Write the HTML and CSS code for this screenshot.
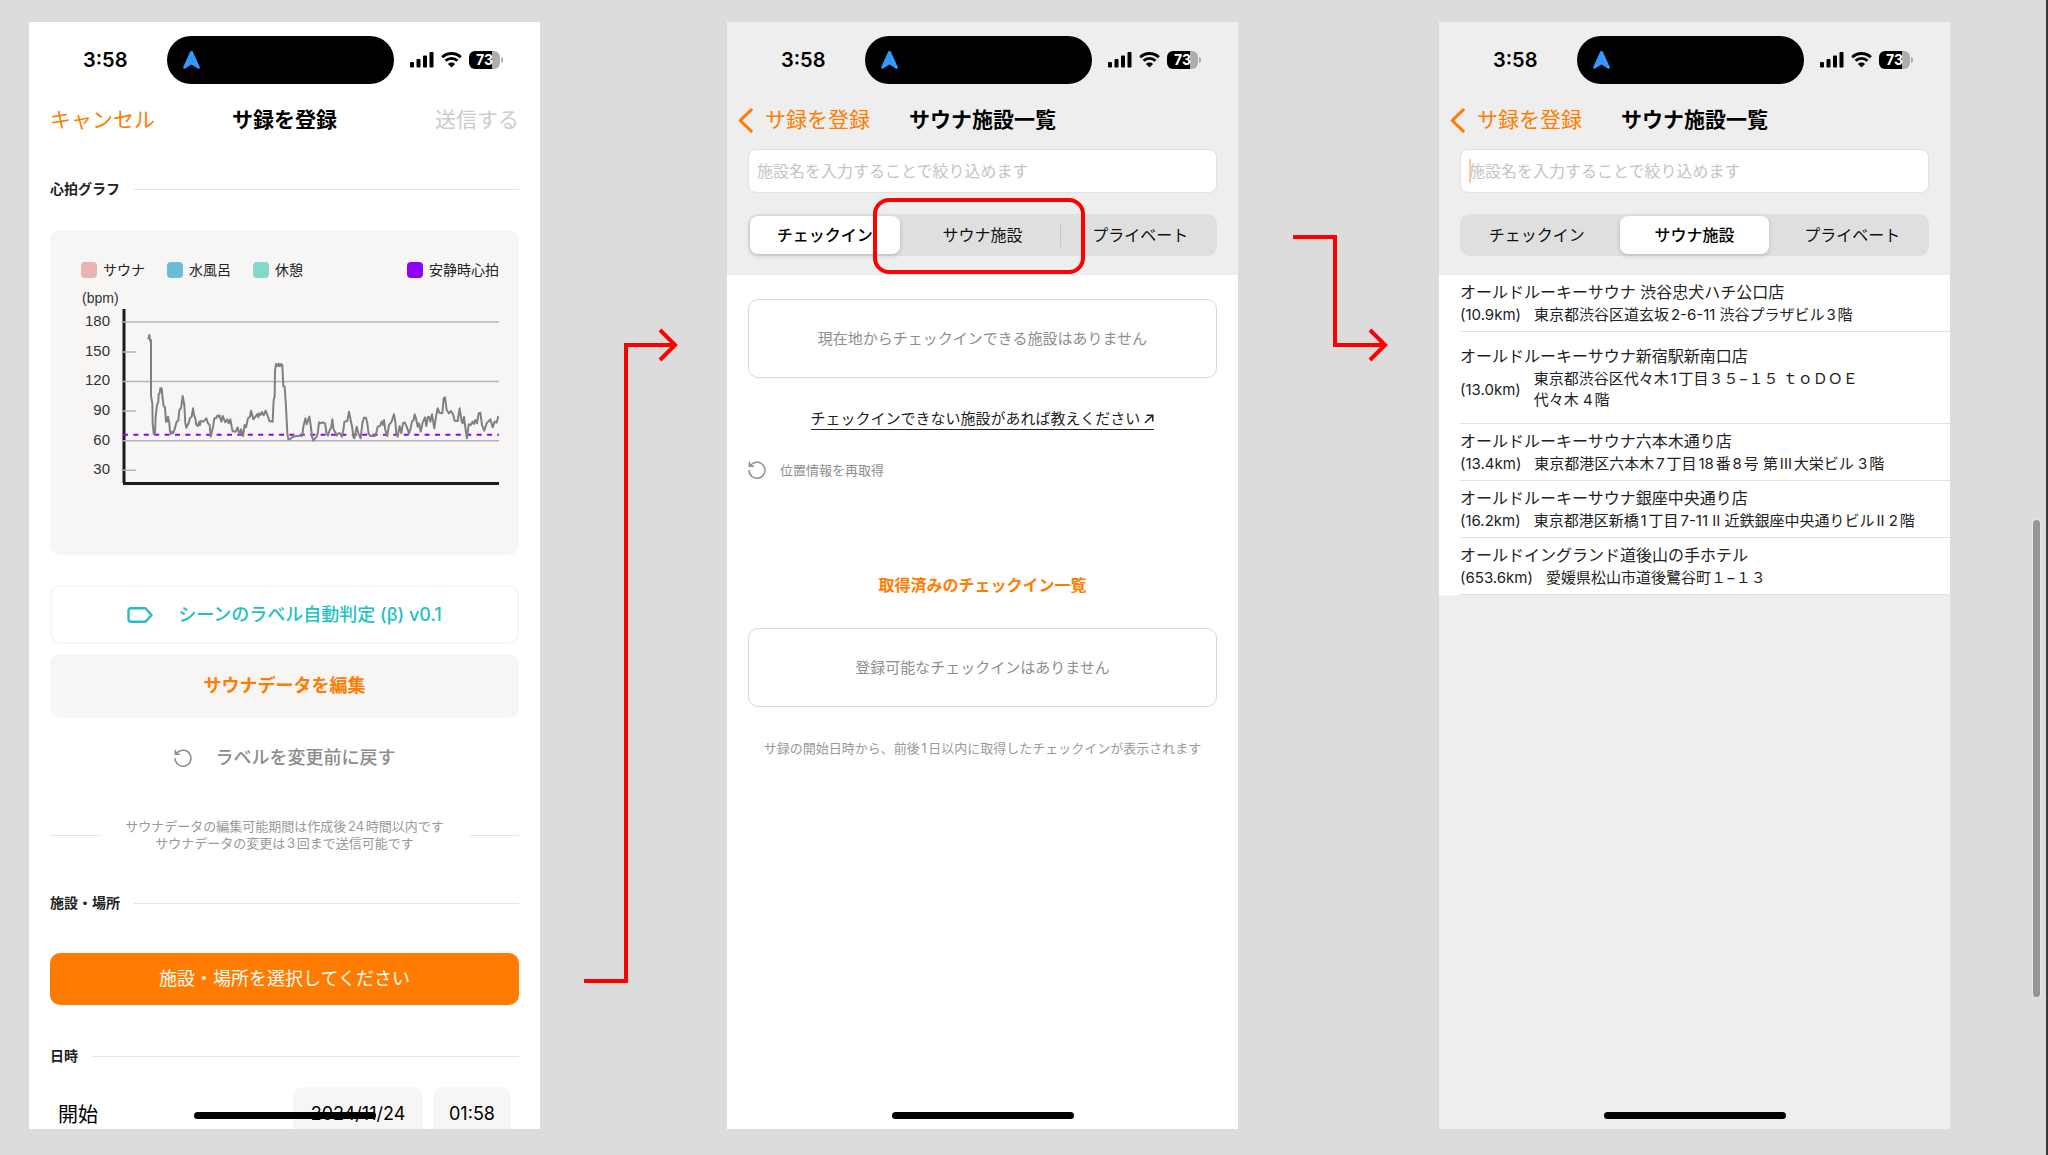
FILE: index.html
```html
<!DOCTYPE html>
<html lang="ja">
<head>
    <meta charset="UTF-8">
    <meta name="viewport" content="width=device-width, initial-scale=1.0">
    <title>サ録を登録 - 施設選択の流れ</title>
    <link rel="stylesheet" href="styles.css">
</head>
<body>
    <!-- Shared icons -->
    <svg class="sprite" aria-hidden="true">
        <symbol id="icon-location" viewBox="0 0 17 18">
            <path d="M8.500 0C9.300 0 9.800.5 10.100 1.200L16.700 15.800C17.300 17.200 16 18.300 14.800 17.600L8.500 13.600 2.200 17.600C1 18.300-.3 17.200.3 15.800L6.900 1.200C7.200.5 7.700 0 8.500 0Z" fill="#3399ff"/>
        </symbol>
        <symbol id="icon-signal" viewBox="0 0 24 16">
            <rect x="0" y="10" width="4" height="5.500" rx="1"/>
            <rect x="6.500" y="7" width="4" height="8.500" rx="1"/>
            <rect x="13" y="3.500" width="4" height="12" rx="1"/>
            <rect x="19.500" y="0" width="4" height="15.500" rx="1"/>
        </symbol>
        <symbol id="icon-wifi" viewBox="0 0 21 16">
            <path d="M1.200 5.300a13.300 13.300 0 0 1 18.600 0M4.600 8.800a8.500 8.500 0 0 1 11.800 0" fill="none" stroke="#000" stroke-width="2.900"/>
            <path d="M10.500 15.500L6.900 12a5.200 5.200 0 0 1 7.200 0Z"/>
        </symbol>
        <symbol id="icon-reload" viewBox="0 0 18 18">
            <path d="M1 9.200A8 8 0 1 0 3.700 3.200L1.500 5M1.400 .8V5.200H6" fill="none" stroke="currentColor" stroke-width="1.500"/>
        </symbol>
        <symbol id="icon-back" viewBox="0 0 15 25">
            <path d="M13.200 1.800L2.200 12.500 13.200 23.200" fill="none" stroke="currentColor" stroke-width="3" stroke-linecap="round" stroke-linejoin="round"/>
        </symbol>
    </svg>

    <main class="board">
        <!-- 1: record form -->
        <section class="phone">
            <div class="status">
                <span class="time">3:58</span>
                <span class="island"><svg width="17" height="18"><use href="#icon-location"/></svg></span>
                <svg width="24" height="16"><use href="#icon-signal"/></svg>
                <svg class="wifi" width="21" height="16"><use href="#icon-wifi"/></svg>
                <span class="battery">73</span>
            </div>
            <header class="nav">
                <button type="button" class="nav-cancel">キャンセル</button>
                <h1>サ録を登録</h1>
                <button type="button" class="nav-send" disabled>送信する</button>
            </header>
            <div class="form">
                <h2 class="section first">心拍グラフ</h2>
                <div class="card">
                    <ul class="legend">
                        <li><i class="sauna"></i>サウナ</li>
                        <li><i class="water"></i>水風呂</li>
                        <li><i class="rest"></i>休憩</li>
                        <li class="resting"><i class="pulse"></i>安静時心拍</li>
                    </ul>
                    <svg class="chart" viewBox="0 0 418 200" role="img" aria-label="心拍グラフ">
                        <text x="1" y="17" class="unit">(bpm)</text>
                        <g text-anchor="end">
                            <text x="29" y="40">180</text>
                            <text x="29" y="70">150</text>
                            <text x="29" y="99">120</text>
                            <text x="29" y="129">90</text>
                            <text x="29" y="159">60</text>
                            <text x="29" y="188">30</text>
                        </g>
                        <path class="axis" d="M43 23V197M42 197.500H418"/>
                        <path class="grid" d="M42 36H418M42 66H55M42 95.500H418M42 125H55M42 154.800H418M42 184.300H55"/>
                        <path class="base" d="M42 148.700H418"/>
                        <g transform="translate(29 4) scale(.3333)">
                            <polyline class="trace" points="115,148 118,135 120,152 123,150 123,318 127,340 128,400 131,431 135,431 137,380 141,345 145,335 146,312 149,310 151,295 155,295 158,325 161,348 165,352 168,395 171,395 174,380 178,400 180,425 183,432 187,425 190,430 196,410 200,395 205,392 208,360 213,355 218,318 223,345 226,400 229,413 236,400 240,385 245,380 249,355 252,375 256,385 259,405 264,408 268,395 270,405 272,393 280,395 289,385 294,400 299,405 302,440 307,420 310,405 313,385 318,385 322,377 326,380 328,376 334,395 338,378 346,397 352,388 356,400 361,388 366,415 368,424 377,425 383,412 386,425 390,432 393,418 399,438 404,405 408,412 414,385 420,380 423,362 427,375 430,388 438,378 442,372 445,382 448,370 452,375 456,366 461,376 467,362 474,380 478,393 488,395 491,330 494,320 495,245 498,222 503,228 506,221 510,229 513,222 517,225 520,288 524,290 528,350 532,430 535,448 540,448 545,443 552,440 560,438 570,437"/>
                        </g>
                        <g transform="translate(219 4) scale(.3333)">
                            <polyline class="trace" points="0,437 7,437 10,410 16,385 20,403 28,380 32,405 36,440 40,452 50,440 54,425 57,397 63,400 68,397 75,400 80,432 84,437 90,418 93,415 97,388 101,420 105,425 110,437 115,430 120,430 126,440 131,415 133,395 142,393 147,365 152,390 157,415 160,440 163,445 170,410 175,430 182,445 187,400 192,383 198,383 202,400 206,432 212,438 225,438 230,425 233,410 240,408 245,395 249,405 252,390 256,420 262,438 267,405 275,395 282,373 286,395 289,430 293,440 299,408 304,430 309,400 314,397 320,410 327,430 332,415 336,395 341,390 344,373 348,385 353,410 357,400 362,425 368,398 375,382 379,408 384,380 389,382 391,395 396,373 403,415 408,380 413,355 418,368 427,370 431,325 435,322 440,360 447,370 453,363 460,375 464,392 473,393 479,355 485,395 488,400 492,380 497,420 501,445 506,403 512,405 518,395 522,402 526,390 531,400 536,370 541,368 546,405 553,422 560,400 571,388 578,412 584,395 590,398 595,378"/>
                        </g>
                    </svg>
                </div>
                <button type="button" class="btn btn-label">
                    <svg width="26" height="16" viewBox="0 0 26 16"><path d="M4 1.200H18.500L24.500 8 18.500 14.800H4A2.500 2.500 0 0 1 1.500 12.300V3.700A2.500 2.500 0 0 1 4 1.200Z" fill="none" stroke="currentColor" stroke-width="2.400" stroke-linejoin="round"/></svg>
                    シーンのラベル自動判定 (β) v0.1
                </button>
                <button type="button" class="btn btn-edit">サウナデータを編集</button>
                <button type="button" class="btn btn-reset"><svg width="18" height="18"><use href="#icon-reload"/></svg>ラベルを変更前に戻す</button>
                <div class="limit">
                    <p>サウナデータの編集可能期間は作成後24時間以内です<br>サウナデータの変更は3回まで送信可能です</p>
                </div>
                <h2 class="section">施設・場所</h2>
                <button type="button" class="btn btn-place">施設・場所を選択してください</button>
                <h2 class="section">日時</h2>
                <div class="start">
                    <label for="start-date">開始</label>
                    <input type="text" id="start-date" class="date" value="2024/11/24">
                    <input type="text" class="clock" value="01:58" aria-label="開始時刻">
                </div>
            </div>
            <div class="home"></div>
        </section>

        <svg class="arrow" viewBox="0 0 187 1107" aria-hidden="true"><path d="M44 959H86V323H134M120 308L135 323 120 338"/></svg>

        <!-- 2: facility list, check-in tab -->
        <section class="phone">
            <div class="top">
                <div class="status">
                    <span class="time">3:58</span>
                    <span class="island"><svg width="17" height="18"><use href="#icon-location"/></svg></span>
                    <svg width="24" height="16"><use href="#icon-signal"/></svg>
                    <svg class="wifi" width="21" height="16"><use href="#icon-wifi"/></svg>
                    <span class="battery">73</span>
                </div>
                <header class="nav">
                    <button type="button" class="nav-back"><svg width="15" height="25"><use href="#icon-back"/></svg>サ録を登録</button>
                    <h1>サウナ施設一覧</h1>
                </header>
                <div class="search">
                    <input type="text" placeholder="施設名を入力することで絞り込めます" aria-label="施設名">
                </div>
                <div class="tabs">
                    <button type="button" class="active">チェックイン</button>
                    <button type="button" class="divided">サウナ施設</button>
                    <button type="button">プライベート</button>
                    <span class="highlight"></span>
                </div>
            </div>
            <div class="checkin">
                <p class="empty">現在地からチェックインできる施設はありません</p>
                <a class="report" href="#">チェックインできない施設があれば教えください <svg width="10" height="10" viewBox="0 0 10 10"><path d="M1 9L8.500 1.500M2.500 1.200H8.800V7.500" fill="none" stroke="currentColor" stroke-width="1.500"/></svg></a>
                <button type="button" class="relocate"><svg width="18" height="18"><use href="#icon-reload"/></svg>位置情報を再取得</button>
                <h2>取得済みのチェックイン一覧</h2>
                <p class="empty">登録可能なチェックインはありません</p>
                <p class="period">サ録の開始日時から、前後1日以内に取得したチェックインが表示されます</p>
            </div>
            <div class="home"></div>
        </section>

        <svg class="arrow" viewBox="0 0 201 1107" aria-hidden="true"><path d="M55 215H97V323H146M132 308L147 323 132 338"/></svg>

        <!-- 3: facility list, sauna tab -->
        <section class="phone gray">
            <div class="top">
                <div class="status">
                    <span class="time">3:58</span>
                    <span class="island"><svg width="17" height="18"><use href="#icon-location"/></svg></span>
                    <svg width="24" height="16"><use href="#icon-signal"/></svg>
                    <svg class="wifi" width="21" height="16"><use href="#icon-wifi"/></svg>
                    <span class="battery">73</span>
                </div>
                <header class="nav">
                    <button type="button" class="nav-back"><svg width="15" height="25"><use href="#icon-back"/></svg>サ録を登録</button>
                    <h1>サウナ施設一覧</h1>
                </header>
                <div class="search focused">
                    <input type="text" placeholder="施設名を入力することで絞り込めます" aria-label="施設名">
                </div>
                <div class="tabs">
                    <button type="button">チェックイン</button>
                    <button type="button" class="active">サウナ施設</button>
                    <button type="button">プライベート</button>
                </div>
            </div>
            <ul class="places">
                <li>
                    <h3>オールドルーキーサウナ 渋谷忠犬ハチ公口店</h3>
                    <p><span>(10.9km)</span><span>東京都渋谷区道玄坂2-6-11 渋谷プラザビル3階</span></p>
                </li>
                <li class="tall">
                    <h3>オールドルーキーサウナ新宿駅新南口店</h3>
                    <p><span>(13.0km)</span><span>東京都渋谷区代々木1丁目３５−１５ ｔｏＤＯＥ<br>代々木 4階</span></p>
                </li>
                <li>
                    <h3>オールドルーキーサウナ六本木通り店</h3>
                    <p><span>(13.4km)</span><span>東京都港区六本木7丁目18番8号 第III大栄ビル 3階</span></p>
                </li>
                <li>
                    <h3>オールドルーキーサウナ銀座中央通り店</h3>
                    <p><span>(16.2km)</span><span>東京都港区新橋1丁目7-11 II 近鉄銀座中央通りビルII 2階</span></p>
                </li>
                <li>
                    <h3>オールドイングランド道後山の手ホテル</h3>
                    <p><span>(653.6km)</span><span>愛媛県松山市道後鷺谷町１−１３</span></p>
                </li>
            </ul>
            <div class="home"></div>
        </section>
    </main>
    <div class="scrollbar"></div>
</body>
</html>
```

FILE: styles.css
```css
* {
    box-sizing: border-box;
}
body {
    margin: 0;
    background-color: #dcdcdc;
    border-right: 2px solid #3a3a3a;
    font-family: Inter, "Noto Sans CJK JP", sans-serif;
    text-autospace: normal;
    color: #222;
}
h1, h2, h3, p, ul {
    margin: 0;
    padding: 0;
}
ul {
    list-style: none;
}
button, input {
    font-family: inherit;
    border: none;
    background: none;
    padding: 0;
    margin: 0;
}
svg {
    display: block;
    flex: none;
}
.sprite {
    position: absolute;
    width: 0;
    height: 0;
}

/* board */
.board {
    display: grid;
    grid-template-columns: 511fr 187fr 511fr 201fr 511fr;
    height: 100vh;
    padding: 22px 96px 26px 29px;
}
.phone {
    position: relative;
    min-width: 0;
    background-color: #fff;
    overflow: hidden;
}
.phone.gray, .top {
    background-color: #eee;
}
.arrow {
    width: 100%;
    height: auto;
    fill: none;
    stroke: #f00;
    stroke-width: 4;
}
.home {
    position: absolute;
    left: 50%;
    bottom: 10px;
    width: 182px;
    height: 7px;
    margin-left: -91px;
    border-radius: 4px;
    background-color: #000;
}
.scrollbar {
    position: fixed;
    right: 8px;
    top: 45%;
    width: 7px;
    height: 477px;
    border-radius: 4px;
    background-color: #959595;
    box-shadow: 0 0 0 1px #e8e8e8;
}

/* status bar */
.status {
    display: flex;
    align-items: center;
    height: 76px;
    padding: 14px 40px 14px 54px;
}
.time {
    width: 84px;
    font-size: 20px;
    font-weight: 600;
    color: #000;
}
.island {
    display: flex;
    align-items: center;
    width: 227px;
    height: 48px;
    margin-right: auto;
    padding-left: 16px;
    border-radius: 24px;
    background-color: #000;
}
.wifi {
    margin: 0 7px;
}
.battery {
    position: relative;
    width: 31px;
    height: 18px;
    padding: 0 3px;
    border-radius: 6px;
    background: linear-gradient(90deg, #000 23px, #adadad 23px);
    color: #fff;
    font-size: 14px;
    font-weight: 700;
    line-height: 18px;
    text-align: center;
}
.battery::after {
    content: "";
    position: absolute;
    right: -3px;
    top: 6px;
    width: 2px;
    height: 6px;
    border-radius: 0 2px 2px 0;
    background-color: #adadad;
}

/* navigation */
.nav {
    display: grid;
    grid-template-columns: 1fr auto 1fr;
    align-items: center;
    height: 44px;
    padding: 0 21px;
}
.nav h1 {
    grid-column: 2;
    font-size: 21px;
    line-height: 28px;
    font-weight: 700;
    color: #000;
}
.nav button {
    display: flex;
    align-items: center;
    font-size: 21px;
    line-height: 28px;
    color: #ff7c00;
    white-space: nowrap;
}
.nav .nav-send {
    justify-self: end;
    color: #ccc;
}
.nav .nav-back {
    gap: 12px;
    margin-left: -10px;
}

/* record form */
.form {
    padding: 37px 21px 0;
}
.section {
    display: flex;
    align-items: center;
    gap: 14px;
    margin-top: 41px;
    font-size: 14px;
    line-height: 20px;
    font-weight: 700;
}
.section.first {
    margin-top: 0;
}
.section::after {
    content: "";
    flex: 1;
    height: 1px;
    background-color: #e4e4e4;
}
.card {
    height: 325px;
    margin: 31px 0 30px;
    padding: 30px 20px 0 31px;
    border-radius: 10px;
    background-color: #f7f6f5;
}
.legend {
    display: flex;
    gap: 22px;
    font-size: 14px;
    line-height: 20px;
}
.legend li {
    display: flex;
    align-items: center;
    gap: 6px;
}
.legend i {
    width: 16px;
    height: 16px;
    border-radius: 4px;
}
.legend .resting {
    margin-left: auto;
}
.sauna {
    background-color: #ebb2b2;
}
.water {
    background-color: #69bdd9;
}
.rest {
    background-color: #84d7cd;
}
.pulse {
    background-color: #8f00ff;
}
.chart {
    width: 100%;
    height: auto;
    margin-top: 6px;
    font-family: "Liberation Sans", Arial, sans-serif;
    font-size: 15px;
    fill: #333;
}
.unit {
    font-size: 14px;
}
.axis {
    fill: none;
    stroke: #1c1c1e;
    stroke-width: 3;
}
.grid {
    stroke: #b4b4bc;
    stroke-width: 1.5;
}
.base {
    stroke: #8f00ff;
    stroke-width: 2;
    stroke-dasharray: 5 5.4;
}
.trace {
    fill: none;
    stroke: #808080;
    stroke-width: 6;
    stroke-linejoin: round;
}
.btn {
    display: flex;
    align-items: center;
    justify-content: center;
    width: 100%;
    border-radius: 10px;
    font-size: 18px;
    line-height: 28px;
    font-weight: 500;
}
.btn-label {
    gap: 25px;
    height: 59px;
    border: 2px solid #f7f6f5;
    color: #22bfc3;
}
.btn-edit {
    height: 64px;
    margin: 10px 0 26px;
    background-color: #f7f6f5;
    color: #ff7c00;
    font-weight: 700;
}
.btn-reset {
    gap: 24px;
    color: #8c8c8c;
}
.limit {
    display: flex;
    align-items: center;
    justify-content: space-between;
    margin-top: 46px;
    font-size: 13px;
    line-height: 17px;
    color: #999;
    text-align: center;
}
.limit::before, .limit::after {
    content: "";
    width: 49px;
    height: 1px;
    background-color: #e4e4e4;
}
.btn-place {
    height: 52px;
    margin-top: 40px;
    background-color: #ff7c00;
    color: #fff;
    font-weight: 400;
}
.start {
    display: flex;
    align-items: center;
    gap: 10px;
    margin-top: 21px;
    padding: 0 8px;
    font-size: 20px;
    color: #000;
}
.start label {
    margin-right: auto;
}
.start input {
    width: 78px;
    height: 52px;
    border-radius: 10px;
    background-color: #f7f6f5;
    font-size: 18px;
    text-align: center;
    color: #000;
}
.start .date {
    width: 130px;
}

/* facility list header */
.top {
    padding-bottom: 19px;
}
.search {
    position: relative;
    margin: 7px 21px 21px;
}
.search input {
    display: block;
    width: 100%;
    height: 44px;
    padding: 0 8px;
    border: 1px solid #e2e2e2;
    border-radius: 8px;
    background-color: #fff;
    font-size: 16px;
}
.search input::placeholder {
    color: #c4c4c6;
}
.search.focused::after {
    content: "";
    position: absolute;
    left: 9px;
    top: 10px;
    width: 2px;
    height: 24px;
    background-color: #ffcb99;
}
.tabs {
    position: relative;
    display: grid;
    grid-template-columns: repeat(3, 1fr);
    gap: 8px;
    height: 42px;
    margin: 0 21px;
    padding: 2px;
    border-radius: 10px;
    background-color: #dfdfdf;
}
.tabs button {
    position: relative;
    padding-bottom: 2px;
    border-radius: 8px;
    font-size: 16px;
    color: #111;
}
.tabs .active {
    background-color: #fff;
    box-shadow: 0 2px 5px rgba(0, 0, 0, 0.15);
    font-weight: 500;
    color: #000;
}
.tabs .divided::after {
    content: "";
    position: absolute;
    right: -4px;
    top: 7px;
    width: 1px;
    height: 24px;
    background-color: #c8c8c8;
}
.highlight {
    position: absolute;
    left: 125px;
    top: -16px;
    width: 212px;
    height: 76px;
    border: 4px solid #f00;
    border-radius: 16px;
}

/* check-in tab */
.checkin {
    display: flex;
    flex-direction: column;
    padding: 24px 21px 0;
    text-align: center;
}
.empty {
    height: 79px;
    border: 1px solid #d8d8d8;
    border-radius: 10px;
    font-size: 15px;
    line-height: 77px;
    color: #8e8e8e;
}
.report {
    align-self: center;
    margin: 31px 0 30px;
    border-bottom: 1px solid #222;
    font-size: 15px;
    line-height: 20px;
    color: #222;
    text-decoration: none;
}
.report svg {
    display: inline-block;
}
.relocate {
    display: flex;
    align-items: center;
    gap: 14px;
    font-size: 13px;
    line-height: 20px;
    color: #8e8e8e;
}
.checkin h2 {
    margin: 95px 0 33px;
    font-size: 16px;
    line-height: 20px;
    font-weight: 700;
    color: #ff7c00;
}
.period {
    margin-top: 31px;
    font-size: 13px;
    line-height: 20px;
    color: #999;
}

/* sauna tab */
.places {
    background-color: #fff;
}
.places li {
    margin-left: 21px;
    padding: 5px 0 6px;
    border-bottom: 1px solid #e2e2e2;
}
.places .tall {
    padding: 12px 0 13px;
}
.places h3 {
    font-size: 16px;
    line-height: 24px;
    font-weight: 400;
}
.places p {
    display: flex;
    align-items: center;
    gap: 13px;
    font-size: 15px;
    line-height: 21px;
    white-space: nowrap;
}
```
